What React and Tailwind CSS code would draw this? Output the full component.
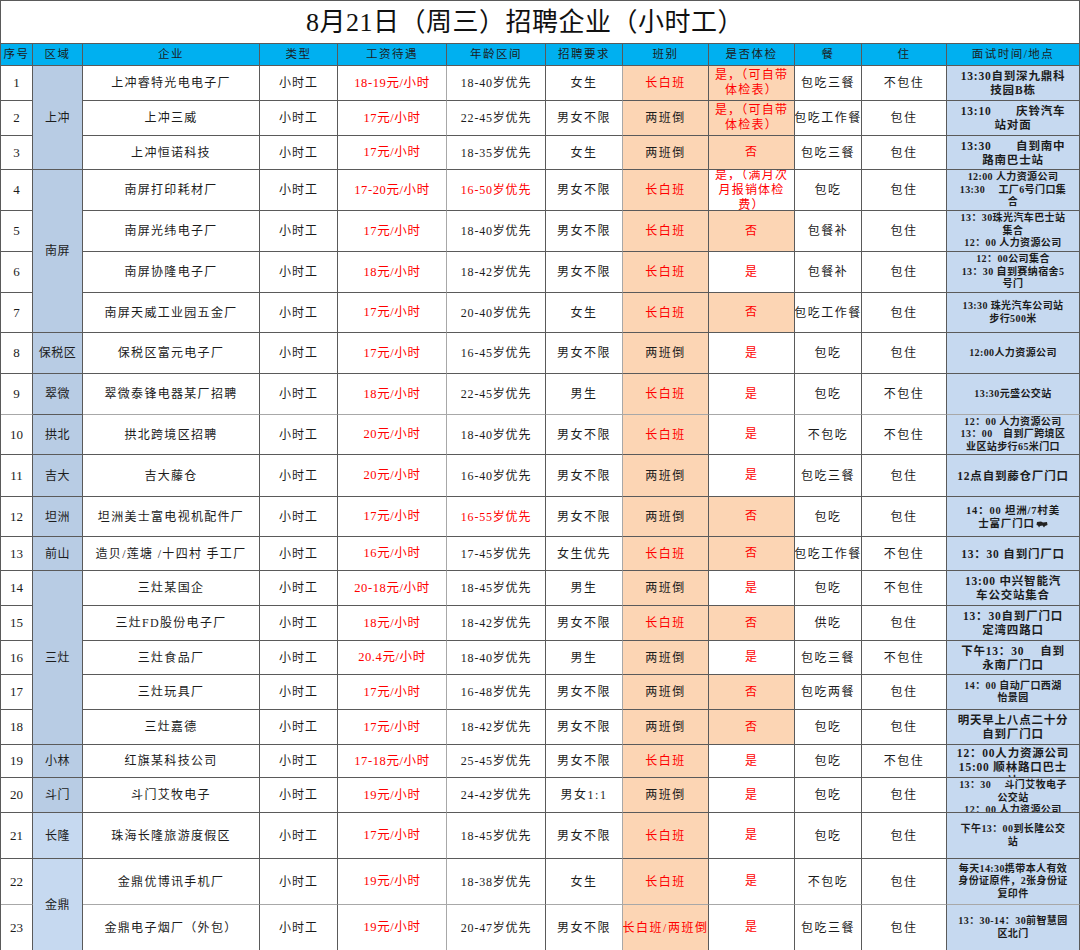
import React from "react";

const rows = [
  { co: "上冲睿特光电电子厂", pay: "18-19元/小时", age: "18-40岁优先", req: "女生", shift: "长白班", exam: ["是，（可自带", "体检表）"], examBg: true, meal: "包吃三餐", stay: "不包住", iv: ["13:30自到深九鼎科", "技园B栋"], ivs: "lg" },
  { co: "上冲三威", pay: "17元/小时", age: "22-45岁优先", req: "男女不限", shift: "两班倒", exam: ["是，（可自带", "体检表）"], examBg: true, meal: "包吃工作餐", stay: "包住", iv: ["13:10　　庆铃汽车", "站对面"], ivs: "lg" },
  { co: "上冲恒诺科技", pay: "17元/小时", age: "18-35岁优先", req: "女生", shift: "两班倒", exam: ["否"], examBg: true, meal: "包吃三餐", stay: "包住", iv: ["13:30　　自到南中", "路南巴士站"], ivs: "lg" },
  { co: "南屏打印耗材厂", pay: "17-20元/小时", age: "16-50岁优先", ageRed: true, req: "男女不限", shift: "长白班", exam: ["是，（满月次", "月报销体检", "费）"], meal: "包吃", stay: "包住", iv: ["12:00 人力资源公司", "13:30　 工厂6号门口集", "合"], ivs: "sm" },
  { co: "南屏光纬电子厂", pay: "17元/小时", age: "18-40岁优先", req: "男女不限", shift: "长白班", exam: ["否"], examBg: true, meal: "包餐补", stay: "包住", iv: ["13：30珠光汽车巴士站", "集合", "12：00 人力资源公司"], ivs: "sm" },
  { co: "南屏协隆电子厂", pay: "18元/小时", age: "18-42岁优先", req: "男女不限", shift: "长白班", exam: ["是"], meal: "包餐补", stay: "包住", iv: ["12：00公司集合", "13：30 自到赛纳宿舍5", "号门"], ivs: "sm" },
  { co: "南屏天威工业园五金厂", pay: "17元/小时", age: "20-40岁优先", req: "女生", shift: "长白班", exam: ["否"], examBg: true, meal: "包吃工作餐", stay: "包住", iv: ["13:30 珠光汽车公司站", "步行500米"], ivs: "sm" },
  { co: "保税区富元电子厂", pay: "17元/小时", age: "16-45岁优先", req: "男女不限", shift: "两班倒", exam: ["是"], meal: "包吃", stay: "包住", iv: ["12:00人力资源公司"], ivs: "sm" },
  { co: "翠微泰锋电器某厂招聘", pay: "18元/小时", age: "22-45岁优先", req: "男生", shift: "长白班", exam: ["是"], meal: "包吃", stay: "不包住", iv: ["13:30元盛公交站"], ivs: "sm", sep: true },
  { co: "拱北跨境区招聘", pay: "20元/小时", age: "18-40岁优先", req: "男女不限", shift: "长白班", exam: ["是"], meal: "不包吃", stay: "不包住", iv: ["12：00 人力资源公司", "13：00　自到厂跨境区", "业区站步行65米门口"], ivs: "sm" },
  { co: "吉大藤仓", pay: "20元/小时", age: "16-40岁优先", req: "男女不限", shift: "两班倒", exam: ["是"], meal: "包吃三餐", stay: "包住", iv: ["12点自到藤仓厂门口"], ivs: "lg" },
  { co: "坦洲美士富电视机配件厂", pay: "17元/小时", age: "16-55岁优先", ageRed: true, req: "男女不限", shift: "两班倒", exam: ["否"], examBg: true, meal: "包吃", stay: "包住", iv: ["14：00 坦洲/7村美", "士富厂门口"], ivs: "md", icon: true },
  { co: "造贝/莲塘 /十四村 手工厂", pay: "16元/小时", age: "17-45岁优先", req: "女生优先", shift: "长白班", exam: ["否"], examBg: true, meal: "包吃工作餐", stay: "不包住", iv: ["13：30 自到门厂口"], ivs: "lg" },
  { co: "三灶某国企", pay: "20-18元/小时", age: "18-45岁优先", req: "男生", shift: "两班倒", exam: ["是"], meal: "包吃", stay: "不包住", iv: ["13:00 中兴智能汽", "车公交站集合"], ivs: "lg" },
  { co: "三灶FD股份电子厂", pay: "18元/小时", age: "18-42岁优先", req: "男女不限", shift: "长白班", exam: ["否"], examBg: true, meal: "供吃", stay: "包住", iv: ["13：30自到厂门口", "定湾四路口"], ivs: "lg" },
  { co: "三灶食品厂", pay: "20.4元/小时", age: "18-40岁优先", req: "男生", shift: "两班倒", exam: ["是"], meal: "包吃三餐", stay: "不包住", iv: ["下午13：30　 自到", "永南厂门口"], ivs: "lg" },
  { co: "三灶玩具厂", pay: "17元/小时", age: "16-48岁优先", req: "男女不限", shift: "两班倒", exam: ["否"], examBg: true, meal: "包吃两餐", stay: "包住", iv: ["14：00 自动厂口西湖", "怡景园"], ivs: "sm" },
  { co: "三灶嘉德", pay: "17元/小时", age: "18-42岁优先", req: "男女不限", shift: "两班倒", exam: ["否"], examBg: true, meal: "包吃", stay: "包住", iv: ["明天早上八点二十分", "自到厂门口"], ivs: "lg" },
  { co: "红旗某科技公司", pay: "17-18元/小时", age: "25-45岁优先", req: "男女不限", shift: "长白班", exam: ["是"], meal: "包吃", stay: "不包住", iv: ["12：00人力资源公司", "15:00 顺林路口巴士", "站"], ivs: "lg", top: true },
  { co: "斗门艾牧电子", pay: "19元/小时", age: "24-42岁优先", req: "男女1:1", shift: "两班倒", exam: ["是"], meal: "包吃", stay: "包住", iv: ["13：30　 斗门艾牧电子", "公交站", "12：00 人力资源公司"], ivs: "sm", top: true },
  { co: "珠海长隆旅游度假区", pay: "17元/小时", age: "18-45岁优先", req: "男女不限", shift: "长白班", exam: ["是"], meal: "包吃", stay: "包住", iv: ["下午13：00到长隆公交", "站"], ivs: "sm" },
  { co: "金鼎优博讯手机厂", pay: "19元/小时", age: "18-38岁优先", req: "女生", shift: "长白班", exam: ["是"], meal: "不包吃", stay: "包住", iv: ["每天14:30携带本人有效", "身份证原件，2张身份证", "复印件"], ivs: "sm", sep: true },
  { co: "金鼎电子烟厂（外包）", pay: "19元/小时", age: "20-47岁优先", req: "男女不限", shift: "长白班/两班倒", exam: ["是"], meal: "包吃三餐", stay: "包住", iv: ["13：30-14：30前智慧园", "区北门"], ivs: "sm" },
];

const regions = {
  0: { name: "上冲", span: "row-span-3" },
  3: { name: "南屏", span: "row-span-4" },
  7: { name: "保税区", span: "" },
  8: { name: "翠微", span: "" },
  9: { name: "拱北", span: "" },
  10: { name: "吉大", span: "" },
  11: { name: "坦洲", span: "" },
  12: { name: "前山", span: "" },
  13: { name: "三灶", span: "row-span-5" },
  18: { name: "小林", span: "" },
  19: { name: "斗门", span: "" },
  20: { name: "长隆", span: "", light: true },
  21: { name: "金鼎", span: "row-span-2", light: true },
};

const ivSize = {
  lg: "text-[11.5px] leading-[14px] tracking-[0.8px]",
  md: "text-[10.5px] leading-[13px] tracking-[0.8px]",
  sm: "text-[10px] leading-[12.5px] tracking-[0.4px]",
};

const cell =
  "flex flex-col items-center justify-center text-center overflow-hidden whitespace-nowrap border-r border-b border-[#5a5a5a]";

function Bus() {
  return (
    <svg width="12" height="7" viewBox="0 0 12 7" className="inline-block ml-[1px] align-middle">
      <path d="M1 1 L5 0.5 L7 1.5 L11 1 L11.5 4 L9 5 L8 6.5 L6.5 4.5 L4 5 L3 6.5 L2 4.5 L0.5 4 Z" fill="#222" />
    </svg>
  );
}

export default function App() {
  const head = ["序号", "区域", "企业", "类型", "工资待遇", "年龄区间", "招聘要求", "班别", "是否体检", "餐", "住", "面试时间/地点"];

  return (
    <div className="w-[1080px] h-[950px] overflow-hidden bg-white font-['Liberation_Serif','Noto_Sans_CJK_SC',serif] text-[#1c1c1c]">
      <div className="grid grid-cols-[32px_50px_177px_78px_109px_99px_77px_86px_86px_67px_85px_133px] grid-rows-[43px_22px_35px_35px_34px_41px_41px_41px_40px_41px_41px_40px_42px_40px_34px_35px_35px_34px_35px_35px_33px_35px_46px_46px_46px] border-l border-t border-[#5a5a5a]">
        <div className={`${cell} col-span-12 pr-[30px]`}>
          <h1 className="text-[26px] tracking-[0.5px] text-[#111]">8月21日（周三）招聘企业（小时工）</h1>
        </div>

        {head.map((h) => (
          <div key={h} className={`${cell} bg-[#00b0f0] text-[11.5px] tracking-[1.5px]`}>
            {h}
          </div>
        ))}

        {rows.map((r, i) => {
          const reg = regions[i];
          const sep = r.sep ? "border-b-[#a8a8a8]" : "";
          return (
            <React.Fragment key={i}>
              <div className={`${cell} ${sep} text-[13px]`}>{i + 1}</div>
              {reg && (
                <div
                  className={`${cell} ${reg.span} ${reg.light ? "bg-[#c6d9f0]" : "bg-[#b8cce4]"} text-[12px] tracking-[0.5px]`}
                >
                  {reg.name}
                </div>
              )}
              <div className={`${cell} ${sep} text-[12px] tracking-[1.3px]`}>{r.co}</div>
              <div className={`${cell} ${sep} text-[12px] tracking-[1px]`}>小时工</div>
              <div className={`${cell} ${sep} border-r-[#a8a8a8] text-[12.5px] tracking-[0.6px] text-[#ff0000]`}>{r.pay}</div>
              <div className={`${cell} ${sep} text-[12px] tracking-[0.8px] ${r.ageRed ? "text-[#ff0000]" : ""}`}>{r.age}</div>
              <div className={`${cell} ${sep} border-r-[#a8a8a8] text-[12px] tracking-[1.5px]`}>{r.req}</div>
              <div
                className={`${cell} ${sep} bg-[#fcd5b4] text-[12px] tracking-[1.5px] ${r.shift === "两班倒" ? "" : "text-[#ff0000]"}`}
              >
                {r.shift}
              </div>
              <div
                className={`${cell} ${sep} ${r.examBg ? "bg-[#fcd5b4]" : ""} text-[12px] leading-[15px] tracking-[1.2px] text-[#ff0000]`}
              >
                {r.exam.map((l) => (
                  <span key={l}>{l}</span>
                ))}
              </div>
              <div className={`${cell} ${sep} text-[12px] tracking-[1.5px]`}>{r.meal}</div>
              <div className={`${cell} ${sep} text-[12px] tracking-[1.5px]`}>{r.stay}</div>
              <div
                className={`${cell} ${sep} bg-[#c6d9f0] px-[2px] font-bold whitespace-pre ${ivSize[r.ivs]} ${r.top ? "!justify-start pt-[1px]" : ""}`}
              >
                {r.iv.map((l, k) => (
                  <span key={k}>
                    {l}
                    {r.icon && k === 1 && <Bus />}
                  </span>
                ))}
              </div>
            </React.Fragment>
          );
        })}
      </div>
    </div>
  );
}
